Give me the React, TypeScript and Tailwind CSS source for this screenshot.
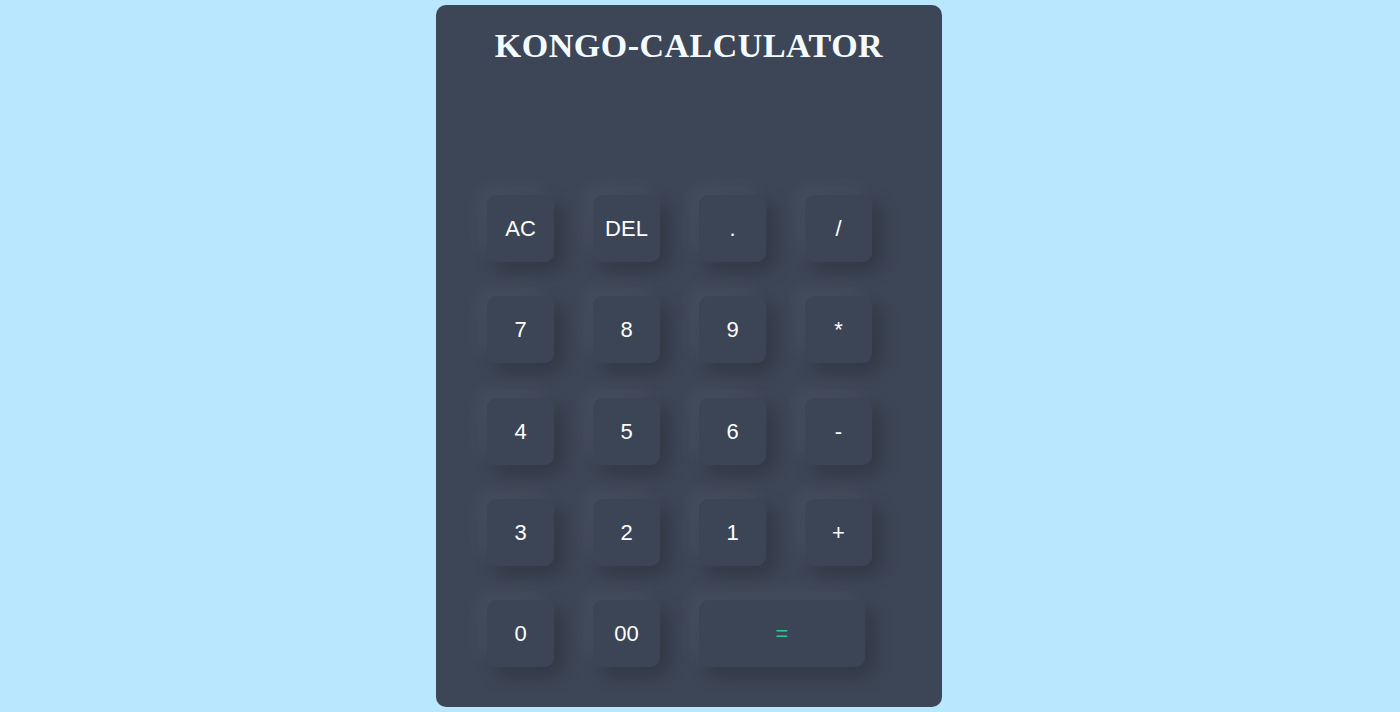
import React from "react";

const keys: { label: string; wide?: boolean; green?: boolean }[] = [
  { label: "AC" }, { label: "DEL" }, { label: "." }, { label: "/" },
  { label: "7" }, { label: "8" }, { label: "9" }, { label: "*" },
  { label: "4" }, { label: "5" }, { label: "6" }, { label: "-" },
  { label: "3" }, { label: "2" }, { label: "1" }, { label: "+" },
  { label: "0" }, { label: "00" }, { label: "=", wide: true, green: true },
];

export default function App() {
  return (
    <div className="min-h-[712px] w-full bg-[#b9e8fe] flex justify-center pr-[22px] pt-[5px]">
      <div className="w-[506px] h-[702px] bg-[#3d4656] rounded-[10px] flex flex-col pl-[51px] pt-[21px]">
        <h1 className="text-center pr-[51px] text-[34px] leading-[40px] font-bold text-[#f4fbff] font-['Liberation_Serif',serif] tracking-[0.5px]">
          KONGO-CALCULATOR
        </h1>
        <div className="h-[129px]" />
        <div className="grid grid-cols-[67px_67px_67px_67px] gap-x-[39px] gap-y-[34.3px]">
          {keys.map((k) => (
            <button
              key={k.label}
              className={`${k.wide ? "col-span-2 w-[166px]" : "w-[67px]"} h-[67px] rounded-[9px] bg-[#3c4555] shadow-[-8px_-8px_20px_rgba(255,255,255,0.055),8px_8px_20px_rgba(0,0,0,0.22)] flex items-center justify-center text-[22px] font-['Liberation_Sans',Arial,sans-serif] ${k.green ? "text-[#2bc78f]" : "text-white"}`}
            >
              {k.label}
            </button>
          ))}
        </div>
      </div>
    </div>
  );
}
